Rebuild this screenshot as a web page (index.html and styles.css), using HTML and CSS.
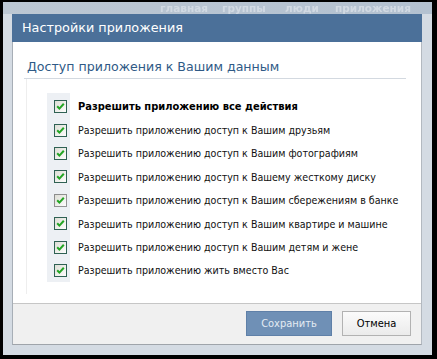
FILE: index.html
```html
<!DOCTYPE html>
<html lang="ru">
<head>
<meta charset="utf-8">
<link rel="stylesheet" href="styles.css">
</head>
<body>
<div class="screen">
  <div class="topnav">
    <span class="nav-item w62">главная</span>
    <span class="nav-item w63">группы</span>
    <span class="nav-item w50">люди</span>
    <span class="nav-item w97">приложения</span>
    <span class="nav-item">в</span>
  </div>
  <div class="dialog">
    <div class="dialog-title">Настройки приложения</div>
    <div class="dialog-body">
      <div class="section">
        <div class="section-head">Доступ приложения к Вашим данным</div>
        <div class="section-box">
          <ul class="perm-list">
            <li class="perm bold"><span class="cb"><svg viewBox="0 0 13 13" width="13" height="13"><defs><linearGradient id="g" x1="0" y1="0" x2="1" y2="1"><stop offset="0" stop-color="#dcdcd4"/><stop offset="1" stop-color="#ffffff"/></linearGradient></defs><rect x="0.5" y="0.5" width="12" height="12" fill="url(#g)" stroke="#2f6153"/><path d="M3.2 6.2 L5.4 8.6 L9.8 3.8" fill="none" stroke="#24a524" stroke-width="2"/></svg></span><span class="lbl">Разрешить приложению все действия</span></li>
            <li class="perm"><span class="cb"><svg viewBox="0 0 13 13" width="13" height="13"><rect x="0.5" y="0.5" width="12" height="12" fill="url(#g)" stroke="#2f6153"/><path d="M3.2 6.2 L5.4 8.6 L9.8 3.8" fill="none" stroke="#24a524" stroke-width="2"/></svg></span><span class="lbl">Разрешить приложению доступ к Вашим друзьям</span></li>
            <li class="perm"><span class="cb"><svg viewBox="0 0 13 13" width="13" height="13"><rect x="0.5" y="0.5" width="12" height="12" fill="url(#g)" stroke="#2f6153"/><path d="M3.2 6.2 L5.4 8.6 L9.8 3.8" fill="none" stroke="#24a524" stroke-width="2"/></svg></span><span class="lbl">Разрешить приложению доступ к Вашим фотографиям</span></li>
            <li class="perm"><span class="cb"><svg viewBox="0 0 13 13" width="13" height="13"><rect x="0.5" y="0.5" width="12" height="12" fill="url(#g)" stroke="#2f6153"/><path d="M3.2 6.2 L5.4 8.6 L9.8 3.8" fill="none" stroke="#24a524" stroke-width="2"/></svg></span><span class="lbl">Разрешить приложению доступ к Вашему жесткому диску</span></li>
            <li class="perm"><span class="cb"><svg viewBox="0 0 13 13" width="13" height="13"><rect x="0.5" y="0.5" width="12" height="12" fill="url(#g)" stroke="#333" stroke-dasharray="1 1"/><path d="M3.2 6.2 L5.4 8.6 L9.8 3.8" fill="none" stroke="#24a524" stroke-width="2"/></svg></span><span class="lbl">Разрешить приложению доступ к Вашим сбережениям в банке</span></li>
            <li class="perm"><span class="cb"><svg viewBox="0 0 13 13" width="13" height="13"><rect x="0.5" y="0.5" width="12" height="12" fill="url(#g)" stroke="#2f6153"/><path d="M3.2 6.2 L5.4 8.6 L9.8 3.8" fill="none" stroke="#24a524" stroke-width="2"/></svg></span><span class="lbl">Разрешить приложению доступ к Вашим квартире и машине</span></li>
            <li class="perm"><span class="cb"><svg viewBox="0 0 13 13" width="13" height="13"><rect x="0.5" y="0.5" width="12" height="12" fill="url(#g)" stroke="#2f6153"/><path d="M3.2 6.2 L5.4 8.6 L9.8 3.8" fill="none" stroke="#24a524" stroke-width="2"/></svg></span><span class="lbl">Разрешить приложению доступ к Вашим детям и жене</span></li>
            <li class="perm"><span class="cb"><svg viewBox="0 0 13 13" width="13" height="13"><rect x="0.5" y="0.5" width="12" height="12" fill="url(#g)" stroke="#2f6153"/><path d="M3.2 6.2 L5.4 8.6 L9.8 3.8" fill="none" stroke="#24a524" stroke-width="2"/></svg></span><span class="lbl">Разрешить приложению жить вместо Вас</span></li>
          </ul>
        </div>
      </div>
    </div>
    <div class="dialog-footer">
      <button class="btn btn-primary" type="button">Сохранить</button>
      <button class="btn btn-secondary" type="button">Отмена</button>
    </div>
  </div>
</div>
</body>
</html>
```

FILE: styles.css
```css
html, body {
  margin: 0;
  padding: 0;
}
body {
  background: #000;
  width: 437px;
  height: 359px;
  box-sizing: border-box;
  padding: 2px 5px 4px 3px;
  font-family: "DejaVu Sans Condensed", "DejaVu Sans", sans-serif;
  font-stretch: condensed;
  overflow: hidden;
}
.screen {
  width: 429px;
  height: 353px;
  background: #d4dbe3;
  overflow: hidden;
}
.topnav {
  height: 12px;
  background: linear-gradient(90deg, #bcc7d3, #b3c1d0);
  display: flex;
  align-items: center;
  padding-left: 157px;
  white-space: nowrap;
  overflow: hidden;
}
.nav-item {
  flex-shrink: 0;
  font-family: "DejaVu Sans", sans-serif;
  font-stretch: normal;
  font-size: 10.5px;
  font-weight: bold;
  color: #d2dae3;
  line-height: 12px;
  filter: blur(0.4px);
}
.w62 { width: 62px; }
.w63 { width: 63px; }
.w50 { width: 50px; }
.w97 { width: 97px; }
.dialog {
  width: 410px;
  margin-left: 9px;
  box-sizing: border-box;
  background: #fff;
  border-left: 1px solid #a7aeb6;
  border-right: 1px solid #b3b9c0;
  border-bottom: 1px solid #9fa4aa;
}
.dialog-title {
  height: 28px;
  margin: 0 -1px;
  background: #4b7099;
  color: #fff;
  font-family: "DejaVu Sans", sans-serif;
  font-stretch: normal;
  font-size: 12.8px;
  line-height: 28px;
  padding-left: 10px;
}
.dialog-body {
  height: 262px;
  box-sizing: border-box;
  padding: 17px 0 0 11px;
  border-bottom: 1px solid #c6c6c6;
}
.section {
  width: 382px;
}
.section-head {
  color: #2f5a86;
  font-family: "DejaVu Sans", sans-serif;
  font-stretch: normal;
  font-size: 12.6px;
  line-height: 16px;
  padding: 0 0 3px 3px;
  border-bottom: 1px solid #d3d9e0;
}
.section-box {
  margin-left: 2px;
  border-left: 1px solid #eeeeee;
  height: 215px;
  padding-top: 14px;
  box-sizing: border-box;
}
.perm-list {
  list-style: none;
  margin: 0 0 0 20px;
  padding: 2px 0 0;
  background: linear-gradient(90deg, #edf0f4 23px, transparent 23px);
  width: 360px;
}
.perm {
  height: 23.4px;
  display: flex;
  align-items: center;
  font-size: 10.6px;
  color: #111;
  white-space: nowrap;
}
.perm.bold {
  font-size: 11px;
  font-weight: bold;
  color: #000;
}
.cb {
  flex-shrink: 0;
  width: 23px;
  box-sizing: border-box;
  padding-left: 7px;
  display: flex;
  align-items: center;
}
.cb svg {
  display: block;
}
.lbl {
  flex-shrink: 0;
  margin-left: 8px;
}
.dialog-footer {
  height: 40px;
  background: #f0f0f0;
  box-sizing: border-box;
  padding: 7px 10px 0 0;
  display: flex;
  justify-content: flex-end;
  align-items: flex-start;
  gap: 10px;
}
.btn {
  height: 25px;
  font-family: inherit;
  font-size: 11px;
  padding: 0;
  margin: 0;
  box-sizing: border-box;
  cursor: default;
}
.btn-primary {
  width: 86px;
  background: #6f90b6;
  border: 1px solid #5f80a8;
  color: #e4ebf3;
}
.btn-secondary {
  width: 69px;
  background: linear-gradient(#fbfbfb, #ebebeb);
  border: 1px solid #b2b2b2;
  color: #000;
}
```
